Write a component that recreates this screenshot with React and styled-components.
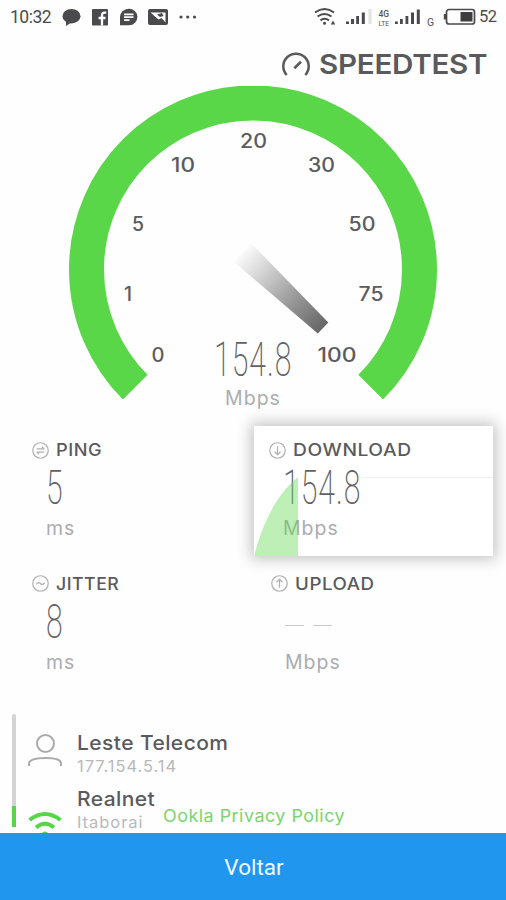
import React from "react";
import styled, { createGlobalStyle } from "styled-components";

const GlobalStyle = createGlobalStyle`
  body {
    margin: 0;
    background: #fff;
  }
  * {
    box-sizing: border-box;
  }
`;

const Page = styled.div`
  display: flex;
  flex-direction: column;
  width: 506px;
  height: 900px;
  overflow: hidden;
  background: #fefefe;
  color: #5a5a5d;
  font-family: Inter, "Liberation Sans", sans-serif;
`;

const Content = styled.main`
  flex: 1;
  min-height: 0;
  overflow: hidden;
`;

//status bar
const StatusBar = styled.header`
  display: flex;
  align-items: center;
  justify-content: space-between;
  height: 33px;
  padding: 0 9px 0 10px;
  color: #4c4c4c;
  font-family: Roboto, sans-serif;
  font-size: 17px;
`;

const StatusGroup = styled.div`
  display: flex;
  align-items: center;
  svg {
    display: block;
  }
`;

const Clock = styled.span`
  width: 50px;
  font-size: 17.5px;
  letter-spacing: -0.5px;
`;

const Battery = styled.span`
  width: 18px;
  margin-left: 3px;
  font-size: 16.5px;
  letter-spacing: -0.5px;
`;

//logo
const Brand = styled.div`
  display: flex;
  align-items: center;
  justify-content: flex-end;
  height: 53px;
  padding: 10px 15px 0 0;
`;

const BrandName = styled.h1`
  width: 172px;
  margin: 0 0 0 8px;
  font-size: 27px;
  font-weight: 600;
  line-height: 32px;
  letter-spacing: -0.25px;
  white-space: nowrap;
  transform: scaleX(1.095);
  transform-origin: left;
`;

//gauge
const Gauge = styled.section`
  height: 333px;
  svg {
    display: block;
  }
`;

const Tick = styled.text`
  fill: #5c5c5f;
  font-size: 19.5px;
  font-weight: 500;
`;

const GaugeReading = styled.div`
  display: flex;
  flex-direction: column;
  align-items: center;
  gap: 2px;
  margin-top: -65px;
`;

const Digits = styled.div`
  height: 48px;
  font-family: Roboto, sans-serif;
  font-size: 48px;
  font-weight: 200;
  line-height: 48px;
  letter-spacing: 1.6px;
  color: #626265;
  transform: scaleX(0.63);
  transform-origin: ${props => props.$origin || "left"};
  white-space: nowrap;
`;

const Unit = styled.div`
  font-size: 19.5px;
  line-height: 24px;
  letter-spacing: 1px;
  color: #acacaf;
`;

//results
const Results = styled.section`
  display: grid;
  grid-template-columns: 222px 239px;
  grid-template-rows: 130px 130px;
  row-gap: 3.5px;
  padding: 7px 0 0 32px;
`;

const Cell = styled.div`
  padding: 14px 0 0 ${props => props.$inset || 0}px;
  ${props =>
    props.$active &&
    `
    background: #fff;
    box-shadow: 0 0 14px 3px rgba(0, 0, 0, 0.24);
  `}
`;

const CellLabel = styled.div`
  display: flex;
  align-items: center;
  gap: 7px;
  height: 20px;
  font-size: 17px;
  font-weight: 500;
  letter-spacing: 0.5px;
`;

const LabelText = styled.span`
  transform: scaleX(${props => props.$stretch || 1});
  transform-origin: left;
`;

const CellBody = styled.div`
  padding: 4px 0 0 14px;
`;

const CellUnit = styled(Unit)`
  margin-top: 4px;
`;

const Empty = styled.div`
  display: flex;
  align-items: center;
  gap: 9px;
  height: 48px;
  padding-top: 8px;
  &:before,
  &:after {
    content: "";
    width: 19px;
    height: 1.5px;
    background: #c9c9cb;
  }
`;

const ActiveStack = styled.div`
  position: relative;
  height: 130px;
  margin: -14px 0 0 -15px;
  padding: 14px 0 0 15px;
`;

const Graph = styled.svg`
  position: absolute;
  left: 0;
  top: 0;
`;

//provider
const Provider = styled.section`
  display: flex;
  margin-top: 24.5px;
  padding-left: 12px;
`;

const Progress = styled.div`
  width: 4px;
  height: 113px;
  border-radius: 2px 2px 0 0;
  background: linear-gradient(#d4d4d5 92px, #55d646 92px);
`;

const Icons = styled.div`
  display: flex;
  flex-direction: column;
  width: 34px;
  margin: 20px 0 0 12px;
`;

const Hosts = styled.div`
  display: flex;
  flex-direction: column;
  gap: 11px;
  margin: 17px 0 0 15px;
`;

const HostName = styled.div`
  font-size: 20px;
  font-weight: 500;
  line-height: 25px;
  letter-spacing: 0.4px;
  transform: scaleX(1.05);
  transform-origin: left;
`;

const HostInfo = styled.div`
  font-size: 16.5px;
  line-height: 20px;
  letter-spacing: 0.95px;
  color: #b9b9bb;
`;

const HostRow = styled.div`
  display: flex;
  align-items: flex-end;
  white-space: nowrap;
`;

const PrivacyLink = styled.a`
  margin: 0 0 5px 12px;
  font-size: 17px;
  line-height: 22px;
  letter-spacing: 0.5px;
  color: #76d66e;
  transform: scaleX(1.05);
  transform-origin: left;
`;

const BackButton = styled.button`
  flex: none;
  height: 67px;
  padding: 1px 0 0 2px;
  border: 0;
  background: #2196ef;
  color: #f1f8ff;
  font-family: Roboto, sans-serif;
  font-size: 22.5px;
`;

const ticks = [
  { label: "0", x: 158, y: 362, width: 13 },
  { label: "1", x: 128, y: 301, width: 8 },
  { label: "5", x: 138, y: 231, width: 12 },
  { label: "10", x: 183, y: 172, width: 24 },
  { label: "20", x: 253.5, y: 148, width: 27 },
  { label: "30", x: 321.5, y: 172, width: 27 },
  { label: "50", x: 362, y: 231, width: 27 },
  { label: "75", x: 371, y: 301, width: 25 },
  { label: "100", x: 337, y: 362, width: 39 }
];

const LeftStatusIcons = () => (
  <svg width="140" height="22" viewBox="60 5 140 22">
    <g fill="#4a4a4c">
      <ellipse cx="71.5" cy="15.2" rx="9" ry="7.2" />
      <path d="M66 19v6l6-4z" />
      <rect x="92" y="8" width="16" height="16.5" rx="1" />
      <path d="M120 16a8.7 8.3 0 1 1 9 8.3h-9z" />
      <path d="M150 8h16q2 0 2 2v12q0 2-2 2h-16q-2 0-2-2V10q0-2 2-2z" />
      <circle cx="181" cy="16" r="1.6" />
      <circle cx="187.7" cy="16" r="1.6" />
      <circle cx="194.5" cy="16" r="1.6" />
    </g>
    <path
      d="M102 24.5V14.2q0-2.500 2.800-2.500h1.400M98.500 17h7"
      fill="none"
      stroke="#fff"
      strokeWidth="2.3"
    />
    <path d="M124 13.300h9.500M124 16.200h9.500M124 19.200h5.500" stroke="#fff" strokeWidth="1.8" />
    <path d="M150.500 11.500h15v10l-4-4.500-3 1.500z" fill="#fff" />
    <path d="M157 13.500l5-1.500 1.500 3-3.500 1z" fill="#4a4a4c" />
  </svg>
);

const RightStatusIcons = () => (
  <svg width="163" height="24" viewBox="313 4 163 24">
    <g fill="none" stroke="#4a4a4c" strokeWidth="2.1">
      <path d="M315 11.500q9.500-7 19 0M317.500 15.500q7-5 14 0M320.500 19.300q4-3 8.500 0" />
    </g>
    <circle cx="324.500" cy="22.300" r="1.500" fill="#4a4a4c" />
    <path d="M333 19.500l2.200 4h-4.400z" fill="#4a4a4c" />
    <g fill="#4a4a4c">
      <rect x="346" y="20.500" width="3" height="2.500" />
      <rect x="351" y="18" width="3" height="5" />
      <rect x="356.200" y="15" width="2.800" height="8" />
      <rect x="361.800" y="11.500" width="3" height="11.500" />
      <rect x="368.500" y="8" width="3" height="15" fill="#e2e2e2" />
      <rect x="395" y="20.500" width="2.800" height="2.500" />
      <rect x="400" y="18" width="2.800" height="5" />
      <rect x="405.500" y="15" width="2.800" height="8" />
      <rect x="411" y="11.500" width="3" height="11.500" />
      <rect x="416.800" y="8.500" width="3" height="14.500" />
    </g>
    <g fill="#555" fontFamily="Roboto, sans-serif">
      <text x="378.500" y="15.500" fontSize="8.500" fontWeight="500" textLength="10.500">
        4G
      </text>
      <text x="378.500" y="24.500" fontSize="8" textLength="10.500" lengthAdjust="spacingAndGlyphs">
        LTE
      </text>
      <text x="427" y="24.500" fontSize="10.500">
        G
      </text>
    </g>
    <rect x="446.500" y="8.500" width="28" height="14.500" rx="2.500" fill="none" stroke="#4a4a4c" strokeWidth="1.700" />
    <rect x="443.800" y="13" width="2.500" height="5.500" fill="#4a4a4c" />
    <rect x="460.500" y="11" width="12" height="9.500" fill="#3d3d3f" />
  </svg>
);

const BrandIcon = () => (
  <svg width="30" height="28" viewBox="0 0 30 28">
    <path
      d="M5.700 24A12.700 12.700 0 1 1 24.300 24"
      fill="none"
      stroke="#5a5a5d"
      strokeWidth="2.500"
    />
    <path d="M13.300 17.300l6.700-6.600" stroke="#5a5a5d" strokeWidth="2.600" />
  </svg>
);

const cellIcons = {
  ping: "M5 7.300h8M10.500 5l2.500 2.300M13 10.700H5M7.500 13L5 10.700",
  jitter: "M4.500 10q2.200-3.500 4.500-1t4.500-1",
  download: "M9 4.500v9M5.800 10.300L9 13.500l3.200-3.200",
  upload: "M9 13.500v-9M5.800 7.700L9 4.500l3.200 3.200"
};

const CellIcon = ({ type }) => (
  <svg width="17" height="17" viewBox="0 0 18 18" fill="none" stroke="#b0b0b2" strokeWidth="1.300">
    <circle cx="9" cy="9" r="8.200" />
    <path d={cellIcons[type]} />
  </svg>
);

const GaugeDial = () => (
  <svg width="506" height="315" viewBox="0 86 506 315">
    <defs>
      <linearGradient id="needle" gradientUnits="userSpaceOnUse" x1="243" y1="253" x2="323" y2="328">
        <stop offset="0" stopColor="#fafafa" />
        <stop offset="0.25" stopColor="#d4d4d4" />
        <stop offset="0.6" stopColor="#9c9c9c" />
        <stop offset="1" stopColor="#666" />
      </linearGradient>
    </defs>
    <path
      d="M135.300 387.200A166.500 166.500 0 1 1 370.700 387.200"
      fill="none"
      stroke="#5ad748"
      strokeWidth="35"
    />
    {ticks.map(tick => (
      <Tick
        key={tick.label}
        x={tick.x}
        y={tick.y}
        textAnchor="middle"
        textLength={tick.width}
        lengthAdjust="spacingAndGlyphs"
      >
        {tick.label}
      </Tick>
    ))}
    <path d="M251 243L328.300 322.500L317.800 333.500L234 262z" fill="url(#needle)" />
  </svg>
);

const Result = ({ type, label, value, unit, inset, stretch }) => (
  <Cell $inset={inset}>
    <CellLabel>
      <CellIcon type={type} />
      <LabelText $stretch={stretch}>{label}</LabelText>
    </CellLabel>
    <CellBody>
      {value ? <Digits>{value}</Digits> : <Empty />}
      <CellUnit>{unit}</CellUnit>
    </CellBody>
  </Cell>
);

const DownloadResult = () => (
  <Cell $active $inset={15}>
    <ActiveStack>
      <CellLabel>
        <CellIcon type="download" />
        <LabelText $stretch={1.13}>DOWNLOAD</LabelText>
      </CellLabel>
      <CellBody>
        <Digits>154.8</Digits>
        <CellUnit>Mbps</CellUnit>
      </CellBody>
      <Graph width="239" height="130" viewBox="0 0 239 130">
        <path d="M0 130C7 103 20 70 44 51V130z" fill="#5ad748" fillOpacity="0.4" />
        <path d="M108 51.500H239" stroke="#f0f0f0" />
      </Graph>
    </ActiveStack>
  </Cell>
);

const App = () => (
  <>
    <GlobalStyle />
    <Page>
      <StatusBar>
        <StatusGroup>
          <Clock>10:32</Clock>
          <LeftStatusIcons />
        </StatusGroup>
        <StatusGroup>
          <RightStatusIcons />
          <Battery>52</Battery>
        </StatusGroup>
      </StatusBar>
      <Content>
        <Brand>
          <BrandIcon />
          <BrandName>SPEEDTEST</BrandName>
        </Brand>
        <Gauge>
          <GaugeDial />
          <GaugeReading>
            <Digits $origin="center">154.8</Digits>
            <Unit>Mbps</Unit>
          </GaugeReading>
        </Gauge>
        <Results>
          <Result type="ping" label="PING" value="5" unit="ms" stretch={1.07} />
          <DownloadResult />
          <Result type="jitter" label="JITTER" value="8" unit="ms" stretch={1.04} />
          <Result type="upload" label="UPLOAD" unit="Mbps" inset={17} stretch={1.1} />
        </Results>
        <Provider>
          <Progress />
          <Icons>
            <svg width="34" height="74" viewBox="0 0 34 74" fill="none" stroke="#aaaaac" strokeWidth="2">
              <circle cx="17.500" cy="9.500" r="8.500" />
              <path d="M1 32v-2q0-6 16.500-6T33 30v2" />
            </svg>
            <svg width="34" height="30" viewBox="0 0 34 30" fill="none" stroke="#55d646" strokeWidth="4">
              <path d="M1.500 12q15.500-12 31 0M8 19.500q9-7.500 18 0" />
              <circle cx="17" cy="27" r="1.500" />
            </svg>
          </Icons>
          <Hosts>
            <div>
              <HostName>Leste Telecom</HostName>
              <HostInfo>177.154.5.14</HostInfo>
            </div>
            <HostRow>
              <div>
                <HostName>Realnet</HostName>
                <HostInfo>Itaborai</HostInfo>
              </div>
              <PrivacyLink>Ookla Privacy Policy</PrivacyLink>
            </HostRow>
          </Hosts>
        </Provider>
      </Content>
      <BackButton>Voltar</BackButton>
    </Page>
  </>
);

export default App;
